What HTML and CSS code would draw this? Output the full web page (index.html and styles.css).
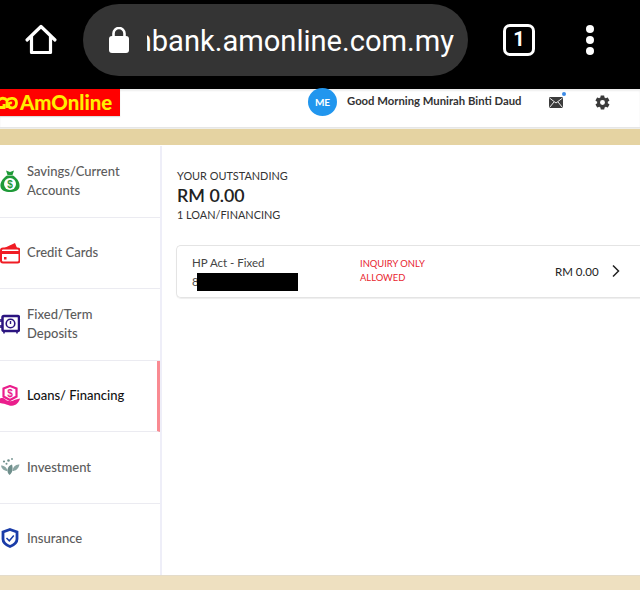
FILE: index.html
```html
<!DOCTYPE html>
<html lang="en">
<head>
<meta charset="utf-8">
<title>AmOnline</title>
<link rel="stylesheet" href="styles.css">
</head>
<body>
<div class="chrome">
  <svg class="home" viewBox="0 0 34 34" width="34" height="34"><path d="M3 17 17 3.500 31 17M7.500 13.500V29.500H26.500V13.500" fill="none" stroke="#fff" stroke-width="3.200" stroke-linecap="round" stroke-linejoin="round"/></svg>
  <div class="omnibox">
    <svg class="lock" viewBox="0 0 20 26" width="20" height="26"><path d="M4.500 10V6.500a5.500 5.500 0 0 1 11 0V10" fill="none" stroke="#fff" stroke-width="2.600"/><rect y="9" width="20" height="17" rx="3" fill="#fff"/></svg>
    <div class="url"><span>mbank.amonline.com.my</span></div>
  </div>
  <div class="tabs">1</div>
  <div class="dots"><i></i><i></i><i></i></div>
</div>
<header class="topbar">
  <div class="logo">
    <svg class="logo-mark" viewBox="0 0 18 14" width="18" height="14"><path d="M-1.500 4.500C1 1.500 5 1.500 7 4.500V12M7 4.500C9 1.500 16.500 1 16.500 7S9.500 13 8.500 9.500C8 7.500 10 6.500 12 7M-1 11.500 4 11.500 4 8" fill="none" stroke="#ffee00" stroke-width="2.800"/></svg>
    <span>AmOnline</span>
  </div>
  <div class="user">
    <div class="avatar">ME</div>
    <div class="greeting">Good Morning Munirah Binti Daud</div>
    <div class="mail">
      <svg viewBox="0 0 14 11" width="14" height="11"><rect width="14" height="11" rx="1" fill="#3c3c3c"/><path d="M.5 1 7 6l6.500-5M.5 10.500 5 5M13.500 10.500 9 5" fill="none" stroke="#fff" stroke-width=".9"/></svg>
      <i class="badge"></i>
    </div>
    <svg class="gear" viewBox="0 0 24 24" width="17" height="17"><path fill="#3a3a3a" fill-rule="evenodd" d="M19.400 13c.1-.3.100-.7.100-1s0-.7-.1-1l2.100-1.600c.2-.2.200-.4.100-.6l-2-3.500c-.1-.2-.4-.3-.6-.2l-2.500 1c-.5-.4-1.100-.7-1.700-1l-.4-2.600c0-.3-.2-.5-.5-.5h-4c-.3 0-.5.200-.5.400l-.4 2.700c-.6.200-1.200.6-1.700 1l-2.500-1c-.2-.1-.5 0-.6.200l-2 3.500c-.1.200-.1.500.1.600L4.500 11c0 .3-.1.700-.1 1s0 .7.100 1l-2.100 1.600c-.2.200-.2.400-.1.600l2 3.500c.1.200.4.300.6.200l2.500-1c.5.400 1.100.7 1.700 1l.4 2.700c0 .2.200.4.500.4h4c.3 0 .5-.2.500-.4l.4-2.700c.6-.3 1.200-.6 1.700-1l2.500 1c.2.100.5 0 .6-.2l2-3.500c.1-.2.100-.5-.1-.6L19.400 13zM12 15.500a3.500 3.500 0 1 1 0-7 3.500 3.500 0 0 1 0 7z"/></svg>
  </div>
</header>
<div class="band"></div>
<main class="layout">
  <nav class="sidebar">
    <a class="item">
      <svg class="ico" viewBox="0 0 20 24" width="20" height="24"><path d="M6 1.500 10 3l4-1.500-1.500 4.500h-5z" fill="#1f9a38"/><path d="M7 6.500C2 10 0 14 .5 17.500 1 21.500 5 23 10 23s9-1.500 9.500-5.500C20 14 18 10 13 6.500z" fill="#1f9a38"/><circle cx="10" cy="15" r="6" fill="#fff"/><text x="10" y="18.500" class="ico-s green">$</text></svg>
      <span>Savings/Current Accounts</span>
    </a>
    <a class="item">
      <svg class="ico" viewBox="0 0 20 22" width="20" height="22"><path d="M0 8 15 1l2 5z" fill="#f01c24"/><rect x="1" y="6.500" width="18.500" height="14" rx="2" fill="#fff" stroke="#f01c24" stroke-width="2"/><rect x="1" y="9" width="18.500" height="3" fill="#f01c24"/><rect x="4" y="15" width="2.500" height="2.500" fill="#f01c24"/></svg>
      <span>Credit Cards</span>
    </a>
    <a class="item">
      <svg class="ico" viewBox="0 0 20 20" width="20" height="20"><rect x="2.500" y="2" width="16.500" height="15" rx="1.500" fill="#fff" stroke="#2b1480" stroke-width="2.500"/><circle cx="10.500" cy="9.500" r="4.300" fill="none" stroke="#2b1480" stroke-width="1.600"/><path d="M10.500 7v3" stroke="#2b1480" stroke-width="1.400"/><path d="M1 5v3M1 11v3M4 18v1.500M17 18v1.500" stroke="#2b1480" stroke-width="1.600"/></svg>
      <span>Fixed/Term Deposits</span>
    </a>
    <a class="item active">
      <svg class="ico" viewBox="0 0 20 22" width="20" height="22"><path d="M10 1 16.500 3.500V11.500L10 15 3.500 11.500V3.500z" fill="#fff" stroke="#ea1e8c" stroke-width="2.200"/><text x="10" y="11.500" class="ico-s pink">$</text><path d="M0 13.500c2.500-1 4-.5 6 1.500 2 1.500 7.500 1.500 8 0l6-1.500c-1 4-4 7-8 7.200-3.500.2-5-1.700-12-2.700z" fill="#ea1e8c"/></svg>
      <span>Loans/ Financing</span>
    </a>
    <a class="item">
      <svg class="ico" viewBox="0 0 20 18" width="20" height="18"><path d="M9.500 17C6 14 7 8 12 6.500c1 3.500 1 8-2.500 10.500z" fill="#6f8f8c"/><path d="M7.500 13C4 13 1.500 10.500 1 7.500 3.500 7.500 7 9 7.500 13zM12.500 13c3 0 6-2 7-6.500-2.500 0-6.500 1-7 6.500z" fill="#8aa5a2"/><circle cx="4" cy="3.500" r="1.100" fill="#6f8f8c"/><circle cx="8.500" cy="2.500" r="1.300" fill="#6f8f8c"/><circle cx="6.500" cy="5.800" r="1" fill="#6f8f8c"/><circle cx="12" cy="1" r=".9" fill="#6f8f8c"/></svg>
      <span>Investment</span>
    </a>
    <a class="item">
      <svg class="ico" viewBox="0 0 20 20" width="20" height="20"><path d="M10 1.500 17 4v7c0 4-3.200 6-7 7.500-3.800-1.500-7-3.500-7-7.500V4z" fill="#fff" stroke="#1a3ca8" stroke-width="2.800"/><path d="M6.500 10 9.300 12.800 13.800 7.500" fill="none" stroke="#1a3ca8" stroke-width="1.500"/></svg>
      <span>Insurance</span>
    </a>
  </nav>
  <section class="content">
    <div class="summary">
      <div class="cap">YOUR OUTSTANDING</div>
      <div class="total">RM 0.00</div>
      <div class="cap">1 LOAN/FINANCING</div>
    </div>
    <article class="card">
      <div class="acct">
        <div>HP Act - Fixed</div>
        <div class="acct-no">8<i class="redact"></i></div>
      </div>
      <div class="note">INQUIRY ONLY<br>ALLOWED</div>
      <div class="amount">RM 0.00</div>
      <svg class="chev" viewBox="0 0 10 14" width="10" height="14"><path d="M2 1.500 7.500 7 2 12.500" fill="none" stroke="#222" stroke-width="1.500"/></svg>
    </article>
  </section>
</main>
<div class="band footer"></div>
</body>
</html>
```

FILE: styles.css
```css
* { box-sizing: border-box; }
html, body { margin: 0; padding: 0; height: 100%; }
body {
  width: 640px;
  height: 598px;
  overflow: hidden;
  background: #fff;
  font-family: Lato, "Noto Sans", sans-serif;
  color: #333;
}
.chrome {
  height: 89px;
  background: #000;
  display: flex;
  align-items: center;
  padding: 0 0 9px 24px;
}
.home { flex: none; }
.omnibox {
  margin-left: 25px;
  width: 385px;
  height: 72px;
  border-radius: 36px;
  background: #343434;
  display: flex;
  align-items: center;
  padding: 0 14px 0 26px;
  gap: 18px;
  flex: none;
}
.lock { flex: none; }
.url {
  flex: 1;
  min-width: 0;
  overflow: hidden;
  display: flex;
  justify-content: flex-end;
  padding-top: 2px;
  font-family: Roboto, sans-serif;
  font-size: 29.100px;
  color: #fff;
  white-space: nowrap;
}
.url span { flex: none; }
.tabs {
  margin-left: 35px;
  width: 32px;
  height: 32px;
  border: 3.500px solid #fff;
  border-radius: 7px;
  color: #fff;
  font: 700 20px/25px Roboto, sans-serif;
  text-align: center;
  flex: none;
}
.dots {
  margin-left: 51px;
  display: flex;
  flex-direction: column;
  gap: 3px;
}
.dots i { display: block; width: 8px; height: 8px; border-radius: 50%; background: #fff; }
.topbar {
  height: 38px;
  display: flex;
  justify-content: space-between;
  align-items: flex-start;
  box-shadow: 0 2px 2px #eee inset, 0 1px 1px #e6e6e6;
  background: #fff;
}
.logo {
  width: 120px;
  height: 27px;
  background: #f00;
  color: #ffee00;
  font: 900 20.400px/27px Lato, sans-serif;
  display: flex;
  align-items: center;
  overflow: hidden;
  gap: 2px;
  box-shadow: 0 1px 1px #ddd;
}
.logo-mark { flex: none; }
.user {
  display: flex;
  align-items: center;
  height: 26px;
  padding-right: 29px;
}
.avatar {
  width: 29px;
  height: 28px;
  border-radius: 50%;
  background: #2196ee;
  color: #fff;
  font-size: 10px;
  font-weight: 700;
  line-height: 28px;
  text-align: center;
}
.greeting {
  margin: 0 0 3px 10px;
  width: 175px;
  font-size: 11.300px;
  font-weight: 700;
  color: #333;
  white-space: nowrap;
}
.mail { position: relative; margin-left: 27px; display: flex; }
.badge {
  position: absolute;
  top: -5px;
  right: -3px;
  width: 4px;
  height: 4px;
  border-radius: 50%;
  background: #3d8be6;
}
.gear { margin-left: 31px; }
.band {
  height: 17px;
  margin-top: 1px;
  background: #e5d3a2;
  border-top: 1px solid #eeeeea;
}
.layout {
  display: flex;
  height: 429px;
  margin-top: 1px;
}
.sidebar {
  width: 162px;
  flex: none;
  border-right: 2px solid #eeeef8;
  display: grid;
  grid-template-rows: repeat(6, 1fr);
}
.item {
  display: flex;
  align-items: center;
  gap: 7px;
  padding-right: 28px;
  border-bottom: 1px solid #ebebf1;
  font-size: 13px;
  font-weight: 500;
  line-height: 19px;
  color: #5c5c5c;
}
.item:last-child { border-bottom: 0; padding-bottom: 2px; }
.item.active {
  color: #111;
  border-right: 3px solid #f98a92;
  padding-right: 0;
}
.ico { flex: none; width: 20px; }
.ico-s {
  font-family: "Liberation Sans", sans-serif;
  font-size: 10px;
  font-weight: 700;
  text-anchor: middle;
}
.green { fill: #1f9a38; }
.pink { fill: #ea1e8c; }
.content {
  flex: 1;
  min-width: 0;
  padding: 23px 0 0 15px;
}
.summary { color: #333; }
.cap { font-size: 10.900px; line-height: 14px; }
.total { font-size: 17.800px; font-weight: 600; color: #222; line-height: 25px; }
.card {
  margin: 23px 0 0 -1px;
  width: 481px;
  height: 53px;
  border: 1px solid #e4e4e4;
  border-right: 0;
  border-radius: 5px 0 0 5px;
  display: flex;
  align-items: center;
  padding: 0 0 1px 15px;
  box-shadow: 0 1px 1px #eee;
}
.acct { width: 168px; margin-top: 2px; font-size: 11.500px; line-height: 19px; color: #444; }
.acct-no { position: relative; height: 19px; }
.redact {
  position: absolute;
  left: 5px;
  top: 1px;
  width: 101px;
  height: 18px;
  background: #000;
}
.note { width: 195px; font-size: 9.400px; line-height: 14px; color: #e8252f; }
.amount { width: 46px; font-size: 11.500px; color: #222; white-space: nowrap; }
.chev { margin-left: 10px; }
.footer {
  height: 15px;
  margin-top: 0;
  background: #eee0c0;
  border-top: 1px solid #e4dccb;
}
```
